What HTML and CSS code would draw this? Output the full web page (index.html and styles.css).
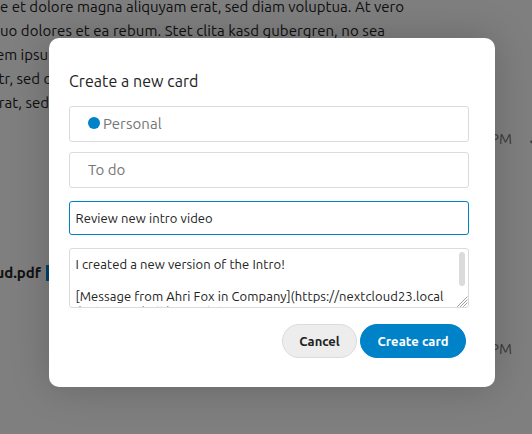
FILE: index.html
```html
<!DOCTYPE html>
<html lang="en">
<head>
<meta charset="utf-8">
<title>Create a new card</title>
<link rel="stylesheet" href="styles.css">
</head>
<body>
<div class="chat">
  <div class="line l1"><span>e et dolore magna aliquyam erat, sed diam voluptua. At vero</span></div>
  <div class="line l2"><span>uo dolores et ea rebum. Stet clita kasd gubergren, no sea</span></div>
  <div class="line l3"><span>em ipsum</span></div>
  <div class="line l4"><span>tr, sed di</span></div>
  <div class="line l5"><span>rat, sed</span></div>
  <div class="time first"><span>1:24 PM</span><svg width="12" height="12" viewBox="0 0 12 12"><path d="M1.5 8l3 3 7-7" fill="none" stroke="#767676" stroke-width="1.8"/></svg></div>
  <div class="file"><b>ud.pdf</b><i></i></div>
  <div class="time second"><span>1:25 PM</span></div>
</div>
<div class="backdrop">
  <form class="modal">
    <h2>Create a new card</h2>
    <div class="select board"><i class="dot"></i><span>Personal</span></div>
    <div class="select stack"><span>To do</span></div>
    <div class="field"><span>Review new intro video</span></div>
    <div class="area">
      <p><span class="intro">I created a new version of the Intro!</span></p>
      <p>&nbsp;</p>
      <p><span class="msg">[Message from Ahri Fox in Company](https://nextcloud23.local</span></p>
      <p><span class="rest">/index.php/call/fxs8v2kd)</span></p>
      <i class="thumb"></i>
      <svg class="grip" width="11" height="11" viewBox="0 0 11 11"><path d="M.5 10.5l10-10M3.5 10.5l7-7M6.5 10.5l4-4" fill="none" stroke="#666" stroke-width="1" stroke-dasharray="1.1 .3"/></svg>
    </div>
    <div class="actions">
      <button type="button" class="cancel"><span>Cancel</span></button>
      <button type="button" class="create"><span>Create card</span></button>
    </div>
  </form>
</div>
</body>
</html>
```
FILE: styles.css
```css
* { box-sizing: border-box; }
html, body { margin: 0; width: 532px; height: 434px; overflow: hidden; }
body { position: relative; background: #fff; color: #222; font: 15px/24px "Ubuntu", "Noto Sans", sans-serif; }
.chat { width: 532px; height: 434px; overflow: hidden; }
.line { display: flex; justify-content: flex-end; height: 24px; white-space: nowrap; }
.l1 { width: 404px; height: 19px; line-height: 14px; }
.l2 { width: 385px; letter-spacing: .06px; }
.l3 { width: 61px; }
.l4 { width: 56px; }
.l5 { width: 49px; }
.time { display: flex; justify-content: flex-end; align-items: center; gap: 17px; height: 24px; color: #767676; white-space: nowrap; }
.first { width: 541px; margin-top: 12px; }
.file { display: flex; justify-content: flex-end; align-items: center; gap: 5px; width: 62px; height: 24px; margin-top: 110px; }
.file i { flex: none; width: 16px; height: 16px; background: #0082c9; }
.second { width: 512px; margin-top: 52px; }
.backdrop { position: absolute; inset: 0; padding: 38px 37px 47px 49px; background: rgba(0,0,0,.5); }
.modal { display: flex; flex-direction: column; height: 349px; padding: 31px 26px 29px 20px; border-radius: 10px; background: #fff; box-shadow: 0 0 40px rgba(0,0,0,.2); }
h2 { margin: 0 0 13px; font-size: 16px; line-height: 24px; font-weight: 400; letter-spacing: .05px; }
.select { display: flex; align-items: center; height: 36px; padding-left: 18px; border: 1px solid #dbdbdb; border-radius: 3px; color: #767676; }
.board { letter-spacing: .08px; }
.stack { margin-top: 10px; }
.dot { width: 12px; height: 12px; margin-right: 3px; margin-bottom: 2px; border-radius: 50%; background: #0082c9; }
.field { display: flex; align-items: center; height: 34px; margin-top: 13px; padding-left: 5.5px; border: 1px solid #0082c9; border-radius: 3px; font-size: 13px; letter-spacing: .07px; }
.area { position: relative; height: 60px; margin-top: 13px; padding: 7px 5.5px; border: 1px solid #dbdbdb; border-radius: 3px; font-size: 13px; line-height: 16px; letter-spacing: .07px; white-space: nowrap; overflow: hidden; }
.area p { margin: 0; height: 16px; }
.rest { color: #777; }
.thumb { position: absolute; top: 3px; right: 3px; width: 6px; height: 34px; border-radius: 3px; background: #dbdbdb; }
.grip { position: absolute; right: 0; bottom: 0; }
.actions { display: flex; justify-content: flex-end; gap: 3px; margin-top: 16px; padding-right: 3px; }
button { display: flex; justify-content: center; align-items: center; height: 34px; padding: 0; border: 1px solid #dbdbdb; border-radius: 17px; font: bold 13px "Ubuntu", "Noto Sans", sans-serif; white-space: nowrap; }
.cancel { width: 75px; background: #ededed; color: #222; }
.create { width: 106px; border-color: #0082c9; background: #0082c9; color: #fff; letter-spacing: .08px; }
```
